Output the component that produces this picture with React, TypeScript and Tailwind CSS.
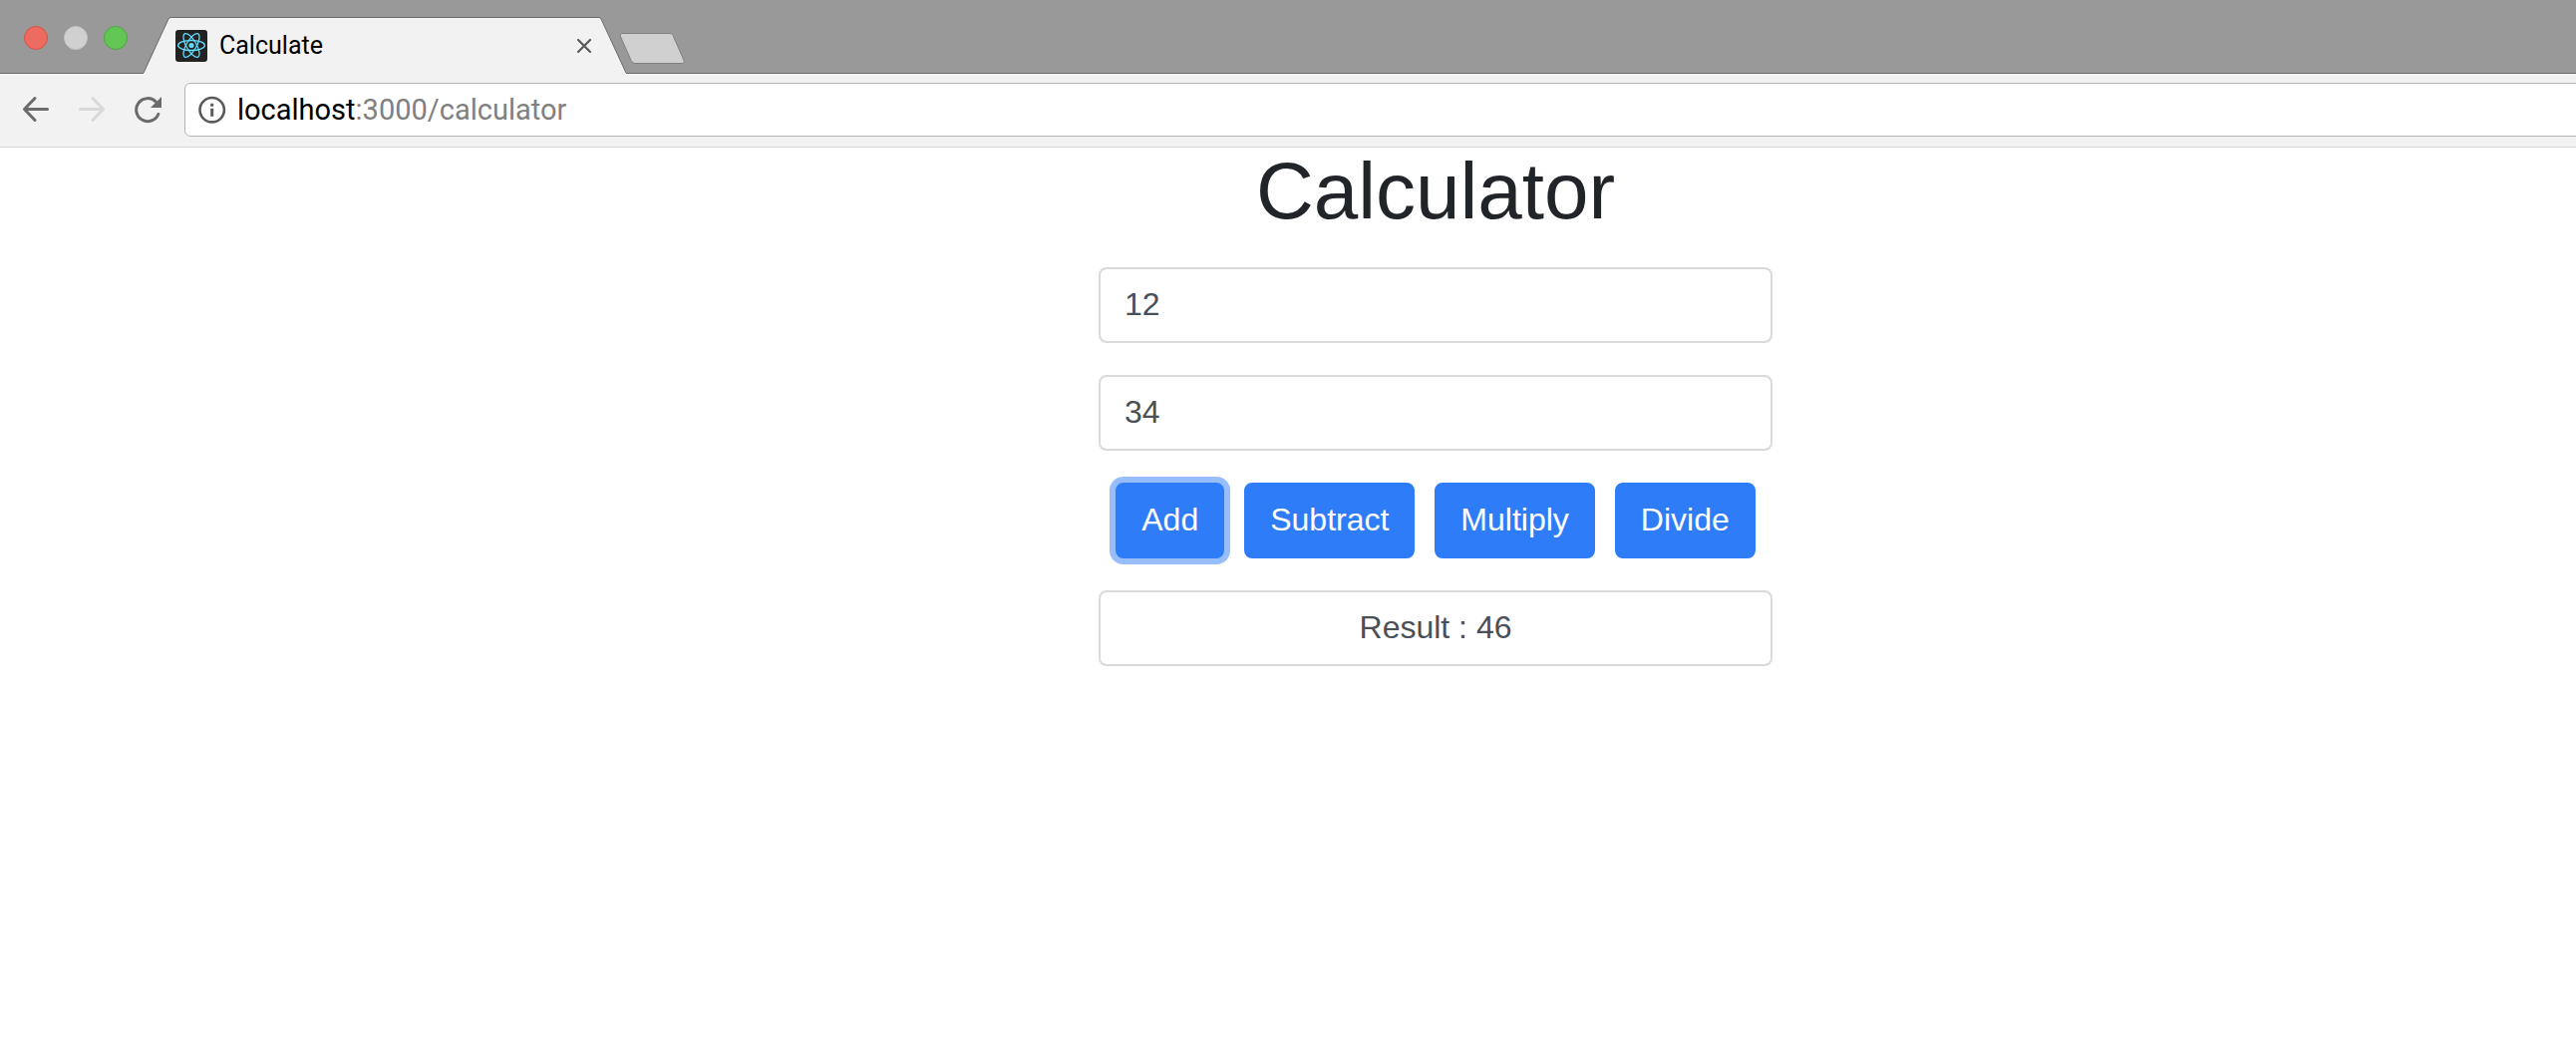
import { useState } from "react";

type Operation = "Add" | "Subtract" | "Multiply" | "Divide";

const operations: Record<Operation, (a: number, b: number) => number> = {
  Add: (a, b) => a + b,
  Subtract: (a, b) => a - b,
  Multiply: (a, b) => a * b,
  Divide: (a, b) => a / b,
};

const names = Object.keys(operations) as Operation[];

function ReactLogo() {
  return (
    <svg viewBox="0 0 32 32" className="size-8 shrink-0" aria-hidden="true">
      <rect width="32" height="32" rx="3" fill="#222" />
      <circle cx="16" cy="15.5" r="2.6" fill="#61dafb" />
      <g fill="none" stroke="#61dafb" strokeWidth="1.3">
        <ellipse cx="16" cy="15.5" rx="13.4" ry="5" />
        <ellipse cx="16" cy="15.5" rx="13.4" ry="5" transform="rotate(60 16 15.5)" />
        <ellipse cx="16" cy="15.5" rx="13.4" ry="5" transform="rotate(120 16 15.5)" />
      </g>
    </svg>
  );
}

function TabStrip() {
  return (
    <div className="flex h-[74px] items-end border-b border-[#6b6b6b] bg-[#999999] pl-6">
      <div className="mb-[23px] flex gap-4">
        <button aria-label="Close window" className="size-6 rounded-full border border-[#d45349] bg-[#ed6b60]" />
        <button aria-label="Minimize window" className="size-6 rounded-full border border-[#c2c2c2] bg-[#d0d0d0]" />
        <button aria-label="Zoom window" className="size-6 rounded-full border border-[#4da83f] bg-[#62c755]" />
      </div>
      <div className="-mb-px ml-4 flex h-[57px]">
        <svg width="27" height="57" viewBox="0 0 27 57" className="shrink-0" aria-hidden="true">
          <path d="M0 56.5 L25 2 Q26 .5 27 .5 V57 H0 Z" fill="#f2f2f2" />
          <path d="M0 56 L25 2 Q26 .5 27 .5" fill="none" stroke="#6b6b6b" />
        </svg>
        <div className="flex w-[430px] items-center border-t border-[#6b6b6b] bg-[#f2f2f2] pb-px pl-[5px] pr-2">
          <ReactLogo />
          <span className="ml-3 grow text-[25px] leading-8 text-black">Calculate</span>
          <button aria-label="Close tab" className="text-[#5a5a5a]">
            <svg width="14" height="14" viewBox="0 0 14 14" aria-hidden="true">
              <path d="M1 1 L13 13 M13 1 L1 13" stroke="currentColor" strokeWidth="2.2" strokeLinecap="round" />
            </svg>
          </button>
        </div>
        <svg width="27" height="57" viewBox="0 0 27 57" className="shrink-0" aria-hidden="true">
          <path d="M0 .5 Q1 .5 2 2 L27 56.5 V57 H0 Z" fill="#f2f2f2" />
          <path d="M0 .5 Q1 .5 2 2 L27 56" fill="none" stroke="#6b6b6b" />
        </svg>
      </div>
      <button aria-label="New tab" className="-ml-[7px] mb-[8px]">
        <svg width="66" height="33" viewBox="0 0 66 33" className="block" aria-hidden="true">
          <path
            d="M3 1.5 H51 Q53 1.5 54 3.5 L65 28.5 Q66 31.5 63.5 31.5 H16 Q13.5 31.5 12 28.5 L1.2 4 Q.5 1.5 3 1.5 Z"
            fill="#d0d0d0"
            stroke="#808080"
          />
        </svg>
      </button>
    </div>
  );
}

function Toolbar() {
  return (
    <div className="flex h-[74px] items-center border-b border-[#d4d4d4] bg-[#f2f2f2] pb-px pl-[22px]">
      <button aria-label="Back" className="text-[#6b6b6b]">
        <svg width="28" height="28" viewBox="0 0 28 28" fill="none" stroke="currentColor" strokeWidth="3" strokeLinecap="round" strokeLinejoin="round" aria-hidden="true">
          <path d="M25.5 13.5 H3 M13 2.5 L2.5 13.5 L13 24.5" />
        </svg>
      </button>
      <button aria-label="Forward" disabled className="ml-7 text-[#d9d9d9]">
        <svg width="28" height="28" viewBox="0 0 28 28" fill="none" stroke="currentColor" strokeWidth="3" strokeLinecap="round" strokeLinejoin="round" aria-hidden="true">
          <path d="M2.5 13.5 H25 M15 2.5 L25.5 13.5 L15 24.5" />
        </svg>
      </button>
      <button aria-label="Reload" className="ml-7 text-[#6b6b6b]">
        <svg width="28" height="28" viewBox="0 0 28 28" fill="none" aria-hidden="true">
          <path d="M24.8 18.5 A11.5 11.5 0 1 1 22.5 6.2" stroke="currentColor" strokeWidth="3" strokeLinecap="round" />
          <path d="M28 1 V12 H17 Z" fill="currentColor" />
        </svg>
      </button>
      <div className="-mr-2 ml-[23px] flex h-[54px] grow items-center rounded-md border border-[#b5b5b5] bg-white pl-[13px]">
        <svg width="28" height="28" viewBox="0 0 28 28" fill="none" className="shrink-0" aria-hidden="true">
          <circle cx="13.7" cy="14.2" r="12.2" stroke="#5a5a5a" strokeWidth="2.6" />
          <path d="M12.2 7.7 H15.2 V10.7 H12.2 Z M12.2 12.7 H15.2 V20.7 H12.2 Z" fill="#5a5a5a" />
        </svg>
        <div role="textbox" aria-label="Address" tabIndex={0} className="ml-[11px] text-[29px] leading-9 text-[#808080]">
          <span className="text-black">localhost</span>:3000/calculator
        </div>
      </div>
    </div>
  );
}

const field =
  "block w-full rounded-lg border-2 border-[#d9d9d9] bg-white px-6 pt-[15px] pb-[17px] text-[32px] leading-10 text-[#495057] outline-none";

function Calculator() {
  const [first, setFirst] = useState("12");
  const [second, setSecond] = useState("34");
  const [operation, setOperation] = useState<Operation>("Add");
  const result = operations[operation](Number(first), Number(second));

  return (
    <main className="flex justify-center pl-74 font-['Liberation_Sans',Arial,sans-serif]">
      <div className="flex w-[676px] flex-col gap-8">
        <h1 className="text-center text-[80px] leading-[88px] text-[#212529]">Calculator</h1>
        <input aria-label="First number" className={field} value={first} onChange={(e) => setFirst(e.target.value)} />
        <input aria-label="Second number" className={field} value={second} onChange={(e) => setSecond(e.target.value)} />
        <div className="flex justify-center gap-5">
          {names.map((name) => (
            <button
              key={name}
              onClick={() => setOperation(name)}
              className={`rounded-lg border-2 border-[#2f7cf8] bg-[#2f7cf8] px-6 pt-[15px] pb-[17px] text-[32px] leading-10 text-white ${
                name === operation ? "ring-6 ring-[#97bdfb]" : ""
              }`}
            >
              {name}
            </button>
          ))}
        </div>
        <output className={`${field} text-center`}>Result : {result}</output>
      </div>
    </main>
  );
}

export default function App() {
  return (
    <div className="min-h-screen overflow-hidden bg-white">
      <header className="font-[Roboto,sans-serif]">
        <TabStrip />
        <Toolbar />
      </header>
      <Calculator />
    </div>
  );
}
